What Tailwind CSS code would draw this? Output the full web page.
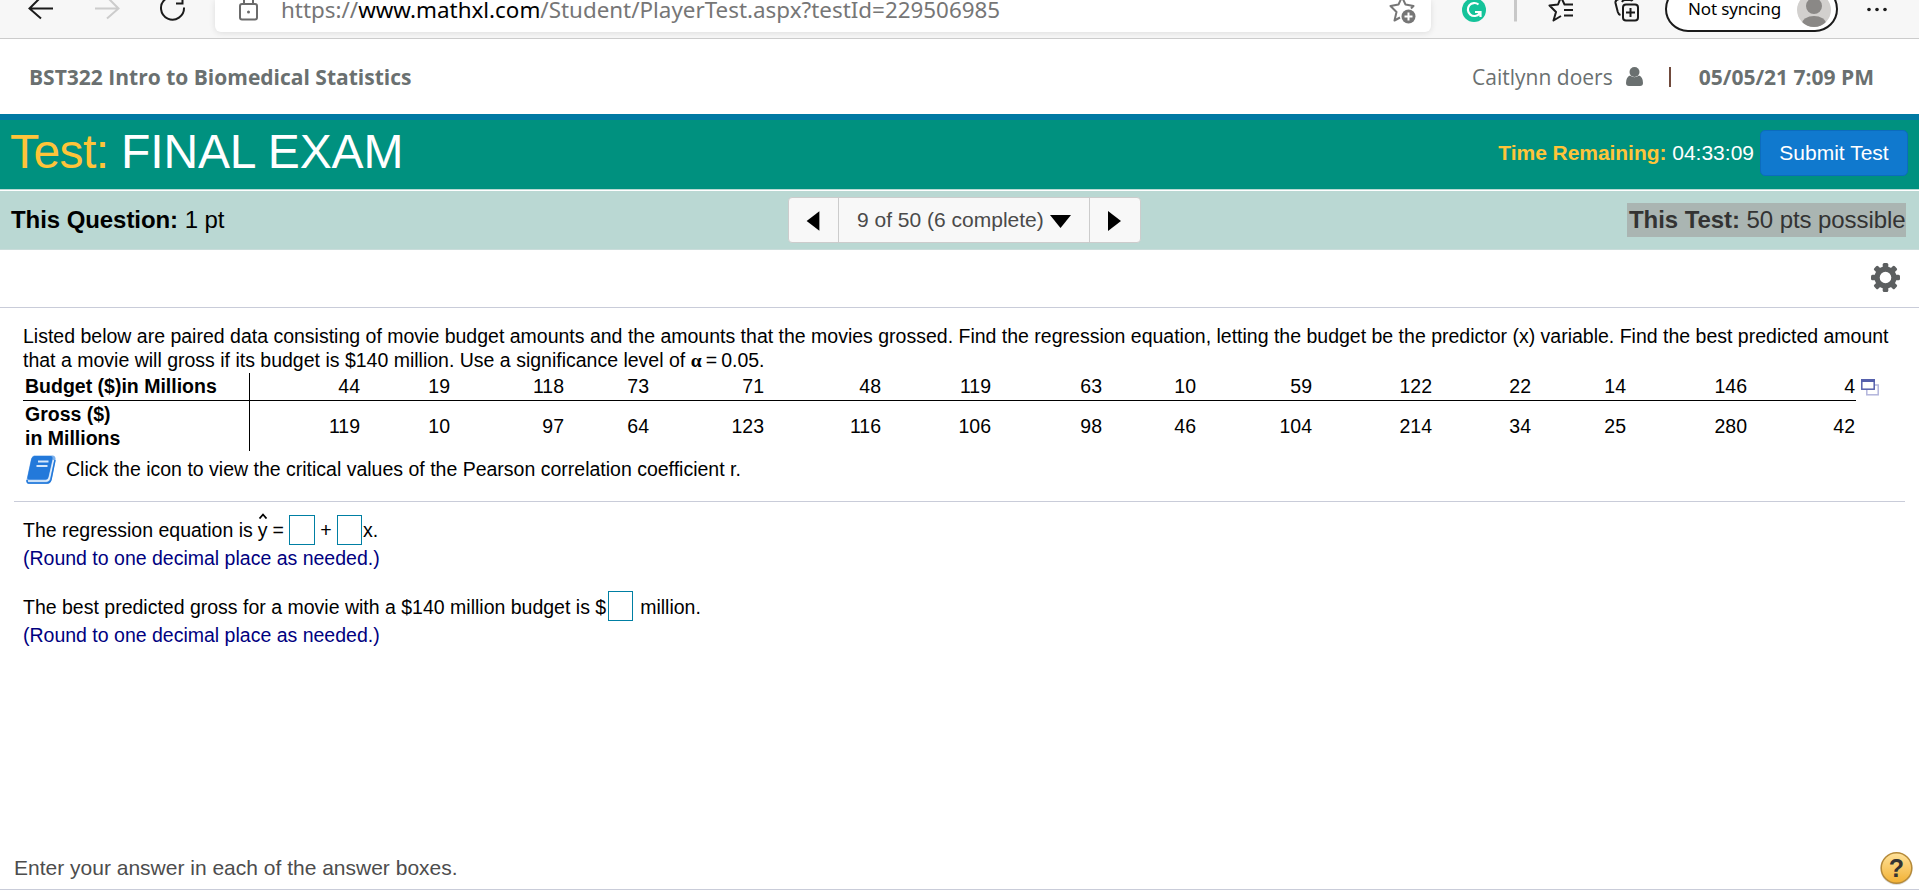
<!DOCTYPE html>
<html lang="en">
<head>
<meta charset="utf-8">
<title>Test: FINAL EXAM</title>
<script src="https://cdn.jsdelivr.net/npm/@tailwindcss/browser@4"></script>
</head>
<body class="w-[1919px] h-[894px] overflow-hidden bg-white text-black font-['Liberation_Sans',Arial,sans-serif] text-[19.5px] leading-6 whitespace-nowrap">
<!-- browser toolbar -->
<div class="flex h-[39px] bg-[#f7f7f7] border-b border-[#cccccc] overflow-hidden">
  <svg class="w-[215px] h-[38px] shrink-0" fill="none" stroke="#1b1b1b" stroke-width="2">
    <path d="M53 8.5H30M41 -3L29.5 8.5L41 18.5"/>
    <path stroke="#cccccc" d="M95 8.5H118M107 -3L118.500 8.500L107 18.500"/>
    <path d="M165.500 -1A11.500 11.500 0 1 0 184 7.500M182.500 -6V3.500H176"/>
  </svg>
  <div class="flex w-[1216px] h-8 shrink-0 bg-white rounded-b-md shadow-[0_1px_6px_#0000001c]">
    <svg class="w-[66px] h-8 shrink-0" fill="none" stroke="#6b6b6b" stroke-width="2">
      <rect x="25" y="4" width="17" height="15.500" rx="2"/><path d="M29 4V0a4.500 4.500 0 0 1 9 0V4"/><circle cx="33.500" cy="12" r="1.500" fill="#6b6b6b" stroke="none"/>
    </svg>
    <div class="font-['Noto_Sans',sans-serif] text-[22.400px] text-[#767676] leading-[30px] h-8 -mt-[5px] grow"><span>https://<span class="text-black">www.mathxl.com</span>/Student/PlayerTest.aspx?testId=229506985</span></div>
    <svg class="w-[46px] h-8 shrink-0" viewBox="1385 0 46 32" fill="none" stroke="#767676" stroke-width="2">
      <path stroke-linejoin="round" d="M1400 17.500L1394.500 20.500L1396.500 12L1390.500 6L1398.500 4.500L1402 -3L1405.500 4.500L1413.500 6L1411 8.500"/>
      <circle cx="1408.500" cy="16.500" r="7" fill="#767676" stroke="none"/><path stroke="#fff" d="M1404.500 16.500h8M1408.500 12.500v8"/>
    </svg>
  </div>
  <svg class="w-[234px] h-[38px] shrink-0" viewBox="1431 0 234 38" fill="none" stroke="#1b1b1b" stroke-width="2">
    <circle cx="1474" cy="10" r="12" fill="#15c39a" stroke="none"/>
    <path stroke="#fff" stroke-width="2.200" d="M1478.500 4.500A6.500 6.500 0 1 0 1479.500 13.500M1475 12H1480.500V17"/>
    <path stroke="#c8c8c8" stroke-width="3" d="M1515.500 0V21.500"/>
    <path stroke-linejoin="round" d="M1561 16L1553.500 20.500L1556 12L1549.500 5.500L1558 4.500L1561 -3L1564.500 4.500H1573M1564 10H1573M1564 15.500H1573"/>
    <rect x="1623" y="4.500" width="15" height="16" rx="3"/><path d="M1630.500 8v9M1626 12.500h9M1620.500 15Q1618.500 14.500 1617.800 12L1615.500 3Q1615 0 1619 -1M1622 2Q1623 0 1625 0H1630Q1632 0 1632.500 1"/>
  </svg>
  <div class="flex w-[173px] h-[46px] -mt-[14px] shrink-0 border-2 border-[#1b1b1b] rounded-full bg-white">
    <span class="ml-[21px] mt-[7px] font-['Noto_Sans',sans-serif] text-[17px] tracking-[-0.15px] leading-7">Not syncing</span>
    <svg class="w-[34px] h-[40px] ml-auto mr-[5px] mt-[3px]" viewBox="0 0 34 40"><defs><clipPath id="av"><circle cx="17" cy="19" r="17"/></clipPath></defs><g clip-path="url(#av)"><rect width="34" height="40" fill="#d2d0ce"/><circle cx="17" cy="15" r="8" fill="#8a8886"/><ellipse cx="17" cy="33" rx="12" ry="8" fill="#8a8886"/></g></svg>
  </div>
  <svg class="w-[81px] h-[38px] shrink-0" viewBox="1838 0 81 38" fill="#1b1b1b"><circle cx="1869" cy="9.500" r="1.800"/><circle cx="1877" cy="9.500" r="1.800"/><circle cx="1885" cy="9.500" r="1.800"/></svg>
</div>
<!-- course header -->
<div class="flex h-[75px] items-center font-['Open_Sans',sans-serif] text-[21px] text-[#6a7070] pl-[29px] pr-[45px]">
  <span class="font-bold">BST322 Intro to Biomedical Statistics</span>
  <div class="ml-auto flex items-center">
    <span>Caitlynn doers</span>
    <svg class="w-[17px] h-[19px] ml-[13px]" viewBox="0 0 17 19" fill="#6a7070"><circle cx="8.500" cy="5" r="5"/><path d="M4 8.500Q8.500 12 13 8.500Q17 10 17 16Q17 19 14 19H3Q0 19 0 16Q0 10 4 8.500Z"/></svg>
    <i class="w-[2px] h-[20px] bg-[#704a3c] ml-[26px] mr-[28px]"></i>
    <span class="font-bold">05/05/21 7:09 PM</span>
  </div>
</div>
<!-- test title bar -->
<div class="flex h-[75px] border-t-[6px] border-[#007aa3] bg-[#00917f] pl-[10px] pr-[11px] text-white text-[21px]">
  <span class="text-[48px] leading-[64px] tracking-[-0.15px]"><span class="text-[#ffc439] tracking-[-0.6px]">Test: </span>FINAL EXAM</span>
  <span class="ml-auto mt-[21px]"><b class="text-[#ffc439] tracking-[-0.05px]">Time Remaining:</b> <span>04:33:09</span></span>
  <button class="ml-[6px] mt-[10px] w-[148px] h-[46px] bg-[#1079ce] border border-[#0c6cbd] rounded-[5px]">Submit Test</button>
</div>
<div class="h-[2px] bg-white border-t border-[#b9d9d3]"></div>
<!-- question navigation -->
<div class="flex h-[59px] bg-[#bad8d3] text-[24px] leading-[34px] border-b border-[#c9dcda] pl-[11px] tracking-[-0.07px]">
  <span class="w-[777px] mt-[12px]"><b>This Question:</b> 1 pt</span>
  <div class="flex w-[353px] h-[46px] mt-[6px] bg-[#f8f8f8] border border-[#cccccc] rounded-[4px] text-[21px] tracking-normal text-[#4a4a4a] leading-[43px]">
    <svg class="w-[50px] h-[44px] border-r border-[#cccccc]" viewBox="0 0 50 44"><path d="M18 23L31 13V33Z"/></svg>
    <div class="flex w-[251px] border-r border-[#cccccc] pl-[18px]"><span>9 of 50 (6 complete)</span><svg class="w-[21px] h-[44px] ml-[6px]" viewBox="0 0 21 44"><path d="M0 17H21L10.500 30Z"/></svg></div>
    <svg class="w-[50px] h-[44px]" viewBox="0 0 50 44"><path d="M18 13L31 23L18 33Z"/></svg>
  </div>
  <span class="ml-auto mr-[13px] mt-[12px] h-[34px] w-[279px] bg-[#aab5b2] text-[#333333] pl-[2px]"><b>This Test:</b> 50 pts possible</span>
</div>
<div class="flex h-[58px] border-b border-[#c9ccd9] justify-end pr-[19px] pt-[13px]">
  <svg class="w-[29px] h-[29px]" viewBox="-14.500 -14.500 29 29" fill="#5c5f60"><path fill-rule="evenodd" d="M-11 0a11 11 0 1 0 22 0a11 11 0 1 0 -22 0M-5.800 0a5.800 5.800 0 1 1 11.600 0a5.800 5.800 0 1 1 -11.600 0"/><g id="tt"><rect x="-2.800" y="-14.500" width="5.600" height="5.500" rx="1.500"/><rect x="-2.800" y="9" width="5.600" height="5.500" rx="1.500"/></g><use href="#tt" transform="rotate(45)"/><use href="#tt" transform="rotate(90)"/><use href="#tt" transform="rotate(135)"/></svg>
</div>
<!-- question -->
<div class="h-[193px] pl-[23px] pt-[16px]">
  <p class="h-12">Listed below are paired data consisting of movie budget amounts and the amounts that the movies grossed. Find the regression equation, letting the budget be the predictor (x) variable. Find the best predicted amount<br>that a movie will gross if its budget is $140 million. Use a significance level of <span class="font-['Liberation_Serif',serif] font-bold leading-none">α</span><span class="[word-spacing:-1.300px]"> = 0.05.</span></p>
  <div class="flex">
    <div class="w-[1833px] text-right">
      <div class="mt-px h-[28px] border-b border-black grid grid-cols-[227px_110px_90px_114px_85px_115px_117px_110px_111px_94px_116px_120px_99px_95px_121px_108px]">
        <b class="text-left border-r border-black pt-px pl-[2px]">Budget ($)in Millions</b>
        <span class="pt-px">44</span><span class="pt-px">19</span><span class="pt-px">118</span><span class="pt-px">73</span><span class="pt-px">71</span><span class="pt-px">48</span><span class="pt-px">119</span><span class="pt-px">63</span><span class="pt-px">10</span><span class="pt-px">59</span><span class="pt-px">122</span><span class="pt-px">22</span><span class="pt-px">14</span><span class="pt-px">146</span><span class="pt-px">4</span>
      </div>
      <div class="h-[50px] leading-[50px] grid grid-cols-[227px_110px_90px_114px_85px_115px_117px_110px_111px_94px_116px_120px_99px_95px_121px_108px]">
        <b class="text-left border-r border-black pt-px pl-[2px] leading-6">Gross ($)<br>in Millions</b>
        <span>119</span><span>10</span><span>97</span><span>64</span><span>123</span><span>116</span><span>106</span><span>98</span><span>46</span><span>104</span><span>214</span><span>34</span><span>25</span><span>280</span><span>42</span>
      </div>
    </div>
    <svg class="w-[18px] h-[17px] ml-[5px] mt-[7px]" viewBox="0 0 18 17" fill="none" stroke-width="1.500"><rect x="5.800" y="6" width="11.400" height="9.800" stroke="#b3b5dc"/><rect x=".8" y=".8" width="12.400" height="9.400" fill="#fff" stroke="#5560ac"/><path stroke="#5560ac" stroke-width="3" d="M0 1.500H14"/></svg>
  </div>
  <div class="flex pl-[3px] mt-[4px]">
    <svg class="w-[30px] h-[30px]" viewBox="0 0 30 30"><path d="M8 0.500H27Q30 1 29.500 5L25.500 25Q24.500 29 21 29H3Q0 28.500 0.500 25L5 4Q6 1 8 .5Z" fill="#7db1ec"/><path d="M8.500 1H24.500Q27 1 26.500 4L22.500 22Q22 24.500 19.500 24.500H3Q1 24.500 1.500 22L5.500 3.500Q6.500 1 8.500 1Z" fill="#2379da"/><path d="M27.500 5L23.500 22.500Q22.700 26 20 26H2" fill="none" stroke="#e4effb" stroke-width="1.600"/><path d="M29 5L25 24.500Q24 28 21 28H2.500Q1 28 1 25" fill="none" stroke="#2379da" stroke-width="1.500"/><path d="M12 6.500H22.500M10.500 11H21.500" stroke="#d6e8fb" stroke-width="2"/></svg>
    <span class="ml-[10px] mt-[2px]">Click the icon to view the critical values of the Pearson correlation coefficient r.</span>
  </div>
</div>
<!-- answers -->
<div class="ml-[14px] mr-[14px] border-t border-[#c9ccd9] pl-[9px] h-[350px]">
  <div class="flex pt-[13px] h-[44px] leading-[31px]">
    <span>The regression equation is</span>
    <span class="relative ml-[5px]">y<svg class="absolute left-0 -top-[2px] w-[10px] h-[6px]" viewBox="0 0 10 6" fill="none" stroke="#000" stroke-width="1.800"><path d="M1.500 5.500L5 1.500L8.500 5.500"/></svg></span>
    <span class="ml-[5px]">=</span>
    <span class="w-[26px] h-[30px] border border-[#007fa3] ml-[5px]"></span>
    <span class="w-[22px] text-center">+</span>
    <span class="w-[25px] h-[30px] border border-[#007fa3]"></span>
    <span class="ml-px">x.</span>
  </div>
  <p class="text-[#000080]">(Round to one decimal place as needed.)</p>
  <div class="flex mt-[21px] h-[32px] leading-[32px]">
    <span>The best predicted gross for a movie with a $140 million budget is $</span><span class="w-[25px] h-[30px] border border-[#007fa3] ml-[2px]"></span><span class="ml-[7px]">million.</span>
  </div>
  <p class="text-[#000080]">(Round to one decimal place as needed.)</p>
</div>
<div class="flex h-[39px] border-b border-[#c9ccd9] pl-[14px] pr-[6px] text-[#4d4d4d] text-[21px]">
  <span class="mt-[5px]">Enter your answer in each of the answer boxes.</span>
  <svg class="w-[33px] h-[35px] ml-auto" viewBox="0 0 33 35"><defs><linearGradient id="hg" x2="0" y2="1"><stop stop-color="#ffe29a"/><stop offset="1" stop-color="#f2b134"/></linearGradient></defs><circle cx="16.500" cy="18" r="16" fill="#00000022"/><circle cx="16.500" cy="17" r="15.300" fill="url(#hg)" stroke="#b58a3a" stroke-width="1.500"/><text x="16.500" y="26" text-anchor="middle" font-size="25" font-weight="bold" fill="#333" font-family="Liberation Sans">?</text></svg>
</div>
</body>
</html>
